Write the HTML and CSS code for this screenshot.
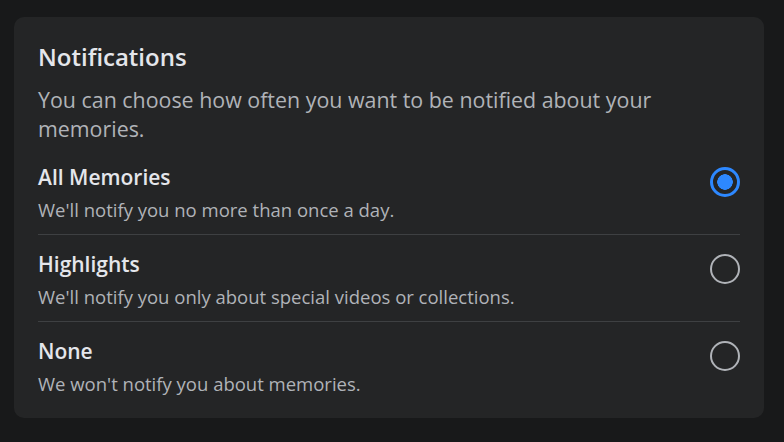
FILE: index.html
```html
<!DOCTYPE html>
<html>
<head>
<meta charset="utf-8">
<link rel="stylesheet" href="styles.css">
</head>
<body>
<div class="card">
  <h1 class="title">Notifications</h1>
  <p class="intro">You can choose how often you want to be notified about your memories.</p>
  <div class="options">
    <div class="option">
      <div class="text">
        <div class="name">All Memories</div>
        <div class="desc">We'll notify you no more than once a day.</div>
      </div>
      <span class="radio checked"></span>
    </div>
    <div class="option">
      <div class="text">
        <div class="name">Highlights</div>
        <div class="desc">We'll notify you only about special videos or collections.</div>
      </div>
      <span class="radio"></span>
    </div>
    <div class="option">
      <div class="text">
        <div class="name">None</div>
        <div class="desc">We won't notify you about memories.</div>
      </div>
      <span class="radio"></span>
    </div>
  </div>
</div>
</body>
</html>
```
FILE: styles.css
```css
html, body {
  margin: 0;
  padding: 0;
  background: #18191a;
}
body {
  font-family: "Open Sans", "Noto Sans", sans-serif;
  padding: 17px 20px 0 14px;
}
.card {
  background: #242526;
  border-radius: 10px;
  padding: 24px 24px 10px;
  display: flex;
  flex-direction: column;
}
.title {
  margin: 0;
  font-size: 24px;
  line-height: 32px;
  font-weight: 600;
  color: #e4e6eb;
}
.intro {
  margin: 12px 0 5px;
  font-size: 21.4px;
  line-height: 29px;
  color: #b0b3b8;
  padding-right: 60px;
}
.options {
  display: flex;
  flex-direction: column;
}
.option {
  display: flex;
  align-items: flex-start;
  justify-content: space-between;
  padding: 15px 0 11px;
  border-bottom: 1px solid #3e4042;
}
.option:last-child {
  border-bottom: none;
}
.name {
  font-size: 21px;
  line-height: 28px;
  font-weight: 600;
  color: #e4e6eb;
}
.desc {
  margin-top: 6px;
  font-size: 18.5px;
  line-height: 26px;
  color: #b0b3b8;
}
.radio {
  margin-top: 3.5px;
  width: 30px;
  height: 30px;
  box-sizing: border-box;
  border-radius: 50%;
  border: 2px solid #b0b3b8;
  flex: none;
}
.radio.checked {
  border: 3px solid #2d88ff;
  background: radial-gradient(circle, #2d88ff 0 7.5px, transparent 8px);
}
```
